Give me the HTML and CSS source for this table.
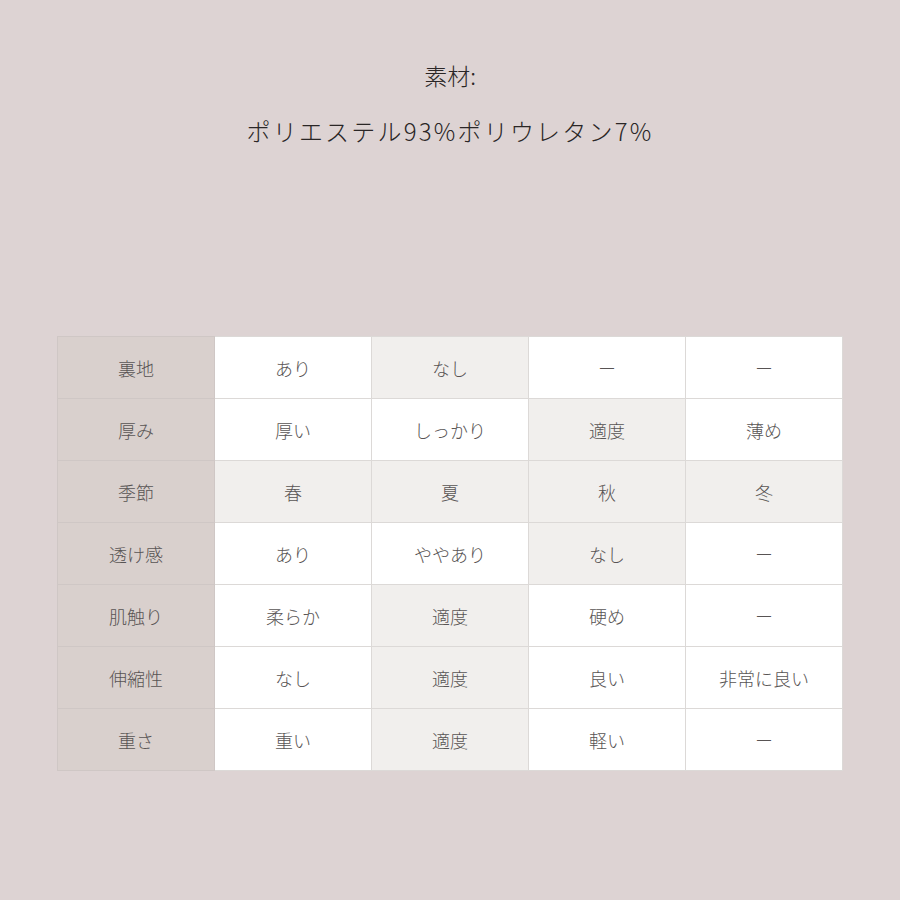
FILE: index.html
```html
<!DOCTYPE html>
<html lang="ja">
<head>
<meta charset="utf-8">
<link rel="stylesheet" href="styles.css">
</head>
<body>
<div class="page">
  <div class="heading">
    <p class="label">素材:</p>
    <p class="material">ポリエステル93%ポリウレタン7%</p>
  </div>
  <table class="spec">
    <tr><th>裏地</th><td>あり</td><td class="on">なし</td><td>ー</td><td>ー</td></tr>
    <tr><th>厚み</th><td>厚い</td><td>しっかり</td><td class="on">適度</td><td>薄め</td></tr>
    <tr><th>季節</th><td class="on">春</td><td class="on">夏</td><td class="on">秋</td><td class="on">冬</td></tr>
    <tr><th>透け感</th><td>あり</td><td>ややあり</td><td class="on">なし</td><td>ー</td></tr>
    <tr><th>肌触り</th><td>柔らか</td><td class="on">適度</td><td>硬め</td><td>ー</td></tr>
    <tr><th>伸縮性</th><td>なし</td><td class="on">適度</td><td>良い</td><td>非常に良い</td></tr>
    <tr><th>重さ</th><td>重い</td><td class="on">適度</td><td>軽い</td><td>ー</td></tr>
  </table>
</div>
</body>
</html>
```

FILE: styles.css
```css
html, body {
  margin: 0;
  padding: 0;
  background: #ddd3d3;
}
body {
  font-family: "Noto Sans CJK JP", "Noto Sans", sans-serif;
  color: #333;
}
.page {
  width: 900px;
  height: 900px;
  padding-top: 57px;
  box-sizing: border-box;
}
.heading {
  text-align: center;
}
.label {
  margin: 0;
  font-size: 23px;
  line-height: 36px;
  font-weight: 300;
  color: #2a2626;
}
.material {
  margin: 20px 0 0 0;
  font-size: 24px;
  line-height: 36px;
  font-weight: 300;
  color: #2a2626;
  letter-spacing: 2.2px;
}
.spec {
  margin: 187px 0 0 57px;
  border-collapse: collapse;
  table-layout: fixed;
  width: 786px;
}
.spec th, .spec td {
  height: 61px;
  padding: 0;
  border: 1px solid #dcd9d7;
  text-align: center;
  vertical-align: middle;
  font-size: 18px;
  font-weight: 300;
  color: #585454;
  background: #ffffff;
}
.spec th {
  background: #d9d0cd;
  border-color: #cfc7c5;
}
.spec td.on {
  background: #f1efed;
}
```
